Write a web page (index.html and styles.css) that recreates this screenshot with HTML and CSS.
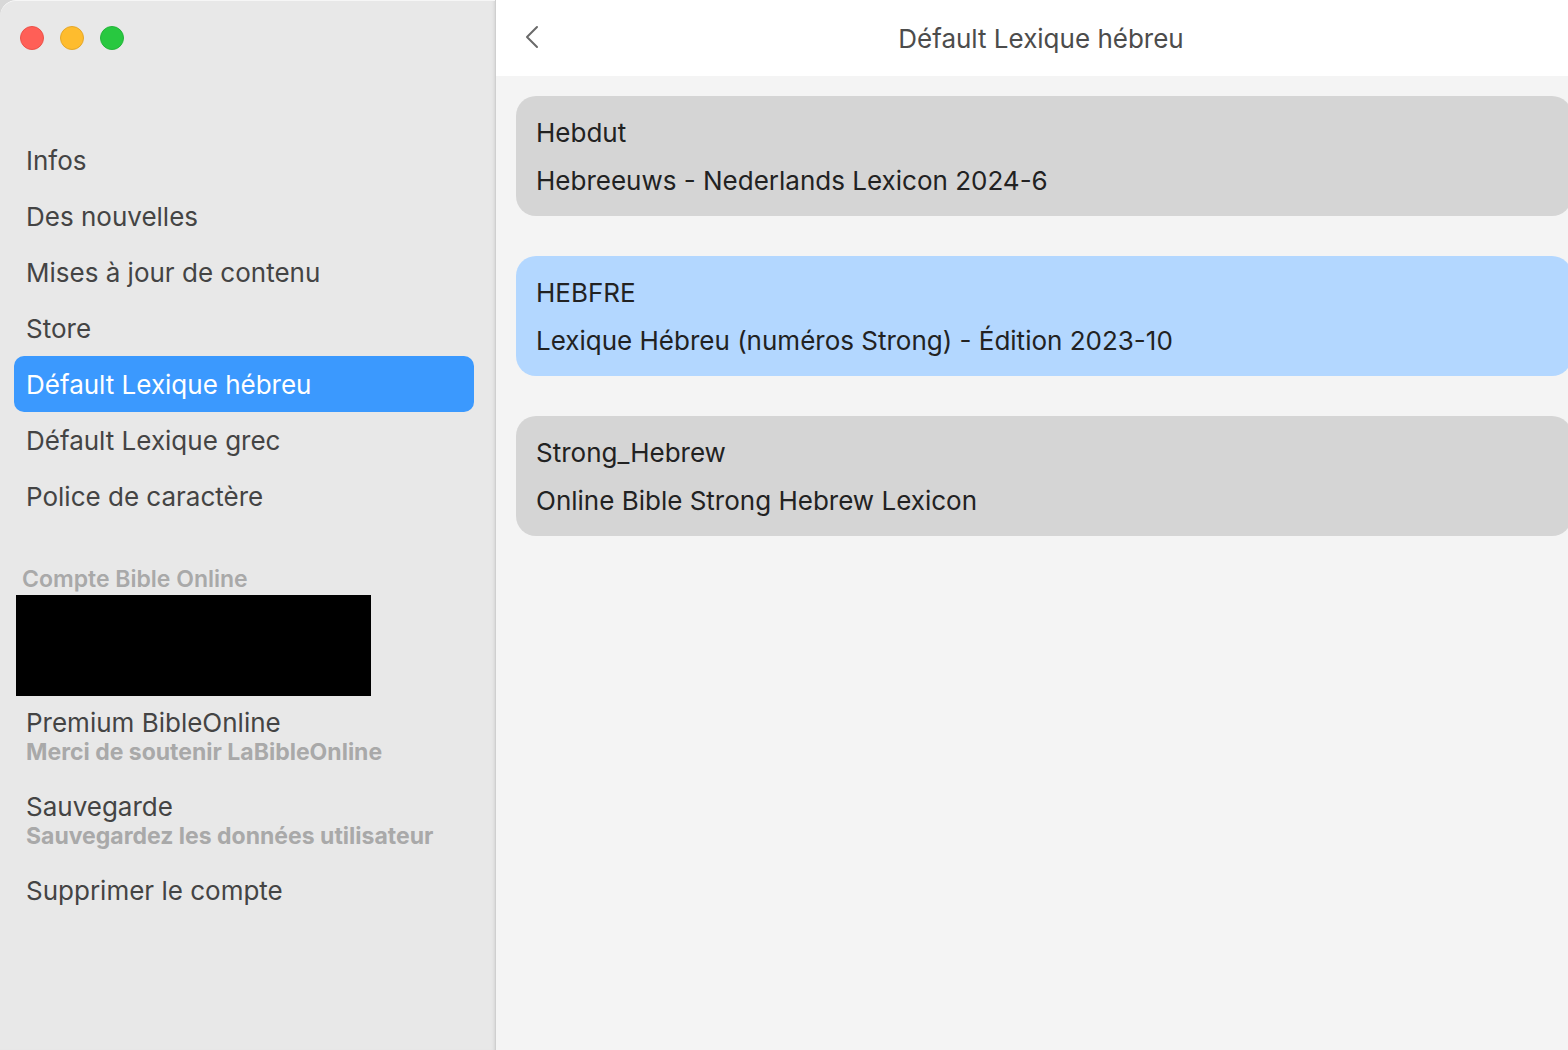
FILE: index.html
```html
<!DOCTYPE html>
<html lang="fr">
<head>
<meta charset="utf-8">
<title>Défault Lexique hébreu</title>
<link rel="stylesheet" href="styles.css">
</head>
<body>
<div class="window">
  <aside class="sidebar">
    <div class="controls">
      <button class="control close" aria-label="Fermer"></button>
      <button class="control minimize" aria-label="Réduire"></button>
      <button class="control expand" aria-label="Agrandir"></button>
    </div>
    <nav class="menu">
      <a class="item" href="#">Infos</a>
      <a class="item" href="#">Des nouvelles</a>
      <a class="item" href="#">Mises à jour de contenu</a>
      <a class="item" href="#">Store</a>
      <a class="item selected" href="#" aria-current="page">Défault Lexique hébreu</a>
      <a class="item" href="#">Défault Lexique grec</a>
      <a class="item" href="#">Police de caractère</a>
    </nav>
    <section class="account">
      <h2 class="heading">Compte Bible Online</h2>
      <div class="redacted"></div>
      <a class="entry" href="#">Premium BibleOnline<small class="note">Merci de soutenir LaBibleOnline</small></a>
      <a class="entry" href="#">Sauvegarde<small class="note">Sauvegardez les données utilisateur</small></a>
      <a class="entry" href="#">Supprimer le compte</a>
    </section>
  </aside>
  <main class="content">
    <header class="toolbar">
      <button class="back" aria-label="Retour">
        <svg width="16" height="26" viewBox="0 0 16 26" fill="none" stroke="#6a6a6a" stroke-width="2" stroke-linecap="round" stroke-linejoin="round"><path d="M13 2 3 12l10 10"/></svg>
      </button>
      <h1 class="title">Défault Lexique hébreu</h1>
    </header>
    <div class="list">
      <button class="card"><span>Hebdut</span><span>Hebreeuws - Nederlands Lexicon 2024-6</span></button>
      <button class="card chosen"><span>HEBFRE</span><span>Lexique Hébreu (numéros Strong) - Édition 2023-10</span></button>
      <button class="card"><span>Strong_Hebrew</span><span>Online Bible Strong Hebrew Lexicon</span></button>
    </div>
  </main>
</div>
</body>
</html>
```
FILE: styles.css
```css
* { box-sizing: border-box; }
body {
  margin: 0;
  background: #d8d8d8;
  font-family: Inter, "Liberation Sans", sans-serif;
  font-size: 26px;
  line-height: 32px;
  color: #444;
}
button { font: inherit; border: 0; padding: 0; }
a { color: inherit; text-decoration: none; }
.window {
  display: flex;
  min-height: 100vh;
  overflow: hidden;
  border-top-left-radius: 16px;
}
.sidebar {
  flex: 0 0 496px;
  background: #e8e8e8;
  border-right: 1px solid #cfcfcf;
  border-top-left-radius: 16px;
  box-shadow: inset 0 1px #f6f6f6, inset -3px 0 3px -2px #d4d4d4;
}
.controls { display: flex; gap: 16px; padding: 26px 20px 0; }
.control { width: 24px; height: 24px; border-radius: 50%; border: 1px solid; }
.close { background: #ff5f57; border-color: #ec5249; }
.minimize { background: #febc2e; border-color: #e5a72a; }
.expand { background: #28c840; border-color: #24b53a; }
.menu { padding: 82px 21px 0 14px; }
.item { display: block; padding: 13px 12px 11px; border-radius: 10px; }
.selected { background: #3b99fe; color: #fff; }
.account { padding: 40px 16px 0; }
.heading {
  margin: 0 6px;
  font-size: 23px;
  line-height: 31px;
  font-weight: 600;
  color: #a9a9a9;
}
.redacted { width: 355px; height: 101px; background: #000; }
.entry { display: block; margin: 11px 10px 26px; }
.entry + .entry { margin-top: 0; }
.note {
  display: block;
  font-size: 23px;
  line-height: 26px;
  font-weight: 700;
  color: #a9a9a9;
}
.content { flex: 1; min-width: 0; background: #f4f4f4; }
.toolbar {
  display: grid;
  grid-template-columns: 28px 1fr 28px;
  align-items: center;
  height: 76px;
  padding: 0 4px 0 22px;
  background: #fff;
}
.back { display: flex; justify-content: center; background: none; }
.title {
  margin: 2px 0 0;
  font-size: 26px;
  font-weight: 400;
  text-align: center;
  color: #4c4c4c;
}
.list { display: grid; gap: 40px; padding: 20px 0 20px 20px; margin-right: -4px; }
.card {
  display: grid;
  gap: 16px;
  padding: 21px 20px 19px;
  border-radius: 20px;
  background: #d5d5d5;
  color: #222;
  text-align: left;
}
.chosen { background: #b3d7ff; }
```
